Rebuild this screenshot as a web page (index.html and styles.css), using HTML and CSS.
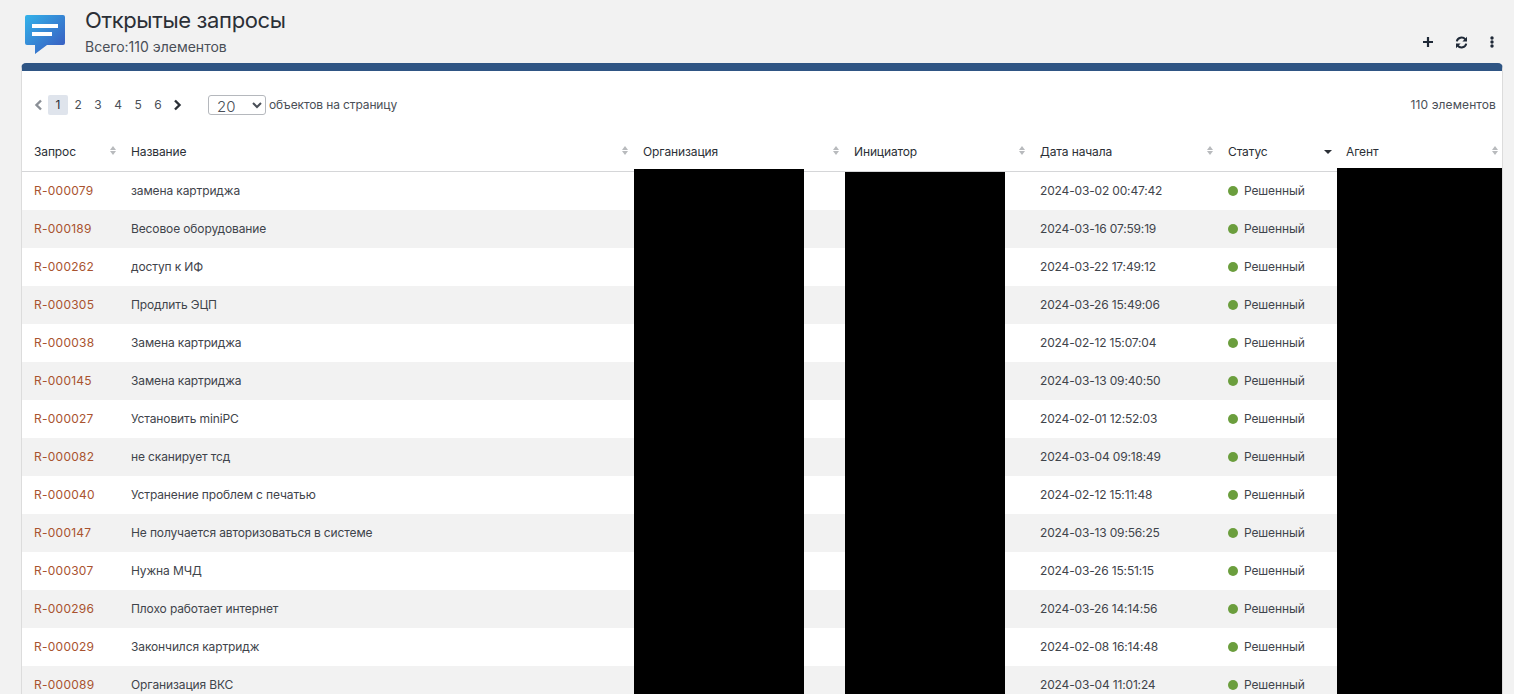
FILE: index.html
```html
<!DOCTYPE html>
<html lang="ru">
<head>
<meta charset="utf-8">
<title>Открытые запросы</title>
<link rel="stylesheet" href="styles.css">
</head>
<body>
<header class="page-head">
  <svg class="logo" width="40" height="40" viewBox="0 0 40 40">
    <defs><linearGradient id="lg" x1="0" y1="0" x2="1" y2="1"><stop offset="0" stop-color="#33b3ea"/><stop offset="1" stop-color="#3a55bd"/></linearGradient></defs>
    <path d="M2 0H38a2 2 0 0 1 2 2V28a2 2 0 0 1-2 2H22L10 39V30H2a2 2 0 0 1-2-2V2A2 2 0 0 1 2 0Z" fill="url(#lg)"/>
    <rect x="7" y="9" width="26" height="4" fill="#fff"/>
    <rect x="7" y="17" width="20" height="4" fill="#fff"/>
  </svg>
  <div class="titles">
    <h1>Открытые запросы</h1>
    <div class="subtitle">Всего:110 элементов</div>
  </div>
  <div class="actions">
    <svg width="12" height="12" viewBox="0 0 12 12"><path d="M6 1V11M1 6H11" stroke="#1f2937" stroke-width="2.2"/></svg>
    <svg width="13" height="13" viewBox="0 0 13 13" fill="none"><path d="M1.800 5.400A4.800 4.800 0 0 1 10.300 3.400" stroke="#1f2937" stroke-width="2"/><path d="M12 .8V5.400H7.400Z" fill="#1f2937"/><path d="M11.200 7.600A4.800 4.800 0 0 1 2.700 9.600" stroke="#1f2937" stroke-width="2"/><path d="M1 12.200V7.600H5.600Z" fill="#1f2937"/></svg>
    <svg class="more" width="4" height="12" viewBox="0 0 4 12"><circle cx="2" cy="2" r="1.700" fill="#1f2937"/><circle cx="2" cy="6" r="1.700" fill="#1f2937"/><circle cx="2" cy="10" r="1.700" fill="#1f2937"/></svg>
  </div>
</header>

<main class="card">
  <div class="toolbar">
    <nav class="pager">
      <svg class="chev" width="9" height="12" viewBox="0 0 9 12"><path d="M7 1.500 2.500 6 7 10.500" fill="none" stroke="#8a8f96" stroke-width="2.400"/></svg>
      <span class="page current">1</span><span class="page">2</span><span class="page">3</span><span class="page">4</span><span class="page">5</span><span class="page">6</span>
      <svg class="chev next" width="9" height="12" viewBox="0 0 9 12"><path d="M2 1.500 6.500 6 2 10.500" fill="none" stroke="#2a2f36" stroke-width="2.400"/></svg>
    </nav>
    <select class="size"><option>20</option></select>
    <span class="size-label">объектов на страницу</span>
    <span class="total">110 элементов</span>
  </div>
  <table class="grid">
    <colgroup><col class="c1"><col class="c2"><col class="c3"><col class="c4"><col class="c5"><col class="c6"><col class="c7"></colgroup>
    <thead>
      <tr>
        <th>Запрос<i class="sort"></i></th><th>Название<i class="sort"></i></th><th>Организация<i class="sort"></i></th><th>Инициатор<i class="sort"></i></th><th>Дата начала<i class="sort"></i></th><th>Статус<i class="sort-desc"></i></th><th>Агент<i class="sort"></i></th>
      </tr>
    </thead>
    <tbody>
      <tr><td><a>R-000079</a></td><td>замена картриджа</td><td></td><td></td><td class="date">2024-03-02 00:47:42</td><td><b class="dot"></b>Решенный</td><td></td></tr>
      <tr><td><a>R-000189</a></td><td>Весовое оборудование</td><td></td><td></td><td class="date">2024-03-16 07:59:19</td><td><b class="dot"></b>Решенный</td><td></td></tr>
      <tr><td><a>R-000262</a></td><td>доступ к ИФ</td><td></td><td></td><td class="date">2024-03-22 17:49:12</td><td><b class="dot"></b>Решенный</td><td></td></tr>
      <tr><td><a>R-000305</a></td><td>Продлить ЭЦП</td><td></td><td></td><td class="date">2024-03-26 15:49:06</td><td><b class="dot"></b>Решенный</td><td></td></tr>
      <tr><td><a>R-000038</a></td><td>Замена картриджа</td><td></td><td></td><td class="date">2024-02-12 15:07:04</td><td><b class="dot"></b>Решенный</td><td></td></tr>
      <tr><td><a>R-000145</a></td><td>Замена картриджа</td><td></td><td></td><td class="date">2024-03-13 09:40:50</td><td><b class="dot"></b>Решенный</td><td></td></tr>
      <tr><td><a>R-000027</a></td><td>Установить miniPC</td><td></td><td></td><td class="date">2024-02-01 12:52:03</td><td><b class="dot"></b>Решенный</td><td></td></tr>
      <tr><td><a>R-000082</a></td><td>не сканирует тсд</td><td></td><td></td><td class="date">2024-03-04 09:18:49</td><td><b class="dot"></b>Решенный</td><td></td></tr>
      <tr><td><a>R-000040</a></td><td>Устранение проблем с печатью</td><td></td><td></td><td class="date">2024-02-12 15:11:48</td><td><b class="dot"></b>Решенный</td><td></td></tr>
      <tr><td><a>R-000147</a></td><td>Не получается авторизоваться в системе</td><td></td><td></td><td class="date">2024-03-13 09:56:25</td><td><b class="dot"></b>Решенный</td><td></td></tr>
      <tr><td><a>R-000307</a></td><td>Нужна МЧД</td><td></td><td></td><td class="date">2024-03-26 15:51:15</td><td><b class="dot"></b>Решенный</td><td></td></tr>
      <tr><td><a>R-000296</a></td><td>Плохо работает интернет</td><td></td><td></td><td class="date">2024-03-26 14:14:56</td><td><b class="dot"></b>Решенный</td><td></td></tr>
      <tr><td><a>R-000029</a></td><td>Закончился картридж</td><td></td><td></td><td class="date">2024-02-08 16:14:48</td><td><b class="dot"></b>Решенный</td><td></td></tr>
      <tr><td><a>R-000089</a></td><td>Организация ВКС</td><td></td><td></td><td class="date">2024-03-04 11:01:24</td><td><b class="dot"></b>Решенный</td><td></td></tr>
    </tbody>
  </table>
  <div class="redact r-org"></div>
  <div class="redact r-init"></div>
  <div class="redact r-agent"></div>
</main>
</body>
</html>
```
FILE: styles.css
```css
html, body { margin: 0; height: 694px; overflow: hidden; }
body {
  background: #f2f2f2;
  color: #2b2f36;
  font-family: "Inter", "Open Sans", "Liberation Sans", sans-serif;
  font-size: 12px;
  letter-spacing: -0.12px;
}
.page-head {
  display: flex;
  height: 63px;
  padding: 0 20px 0 25px;
  box-sizing: border-box;
}
.logo { margin-top: 15px; }
.titles { margin-left: 20px; padding-top: 6px; }
h1 { margin: 0; font-size: 22px; font-weight: 400; line-height: 28px; letter-spacing: -0.36px; color: #2b2f36; }
.subtitle { margin-top: 4px; font-size: 14px; line-height: 18px; letter-spacing: 0; color: #4a4f57; }
.actions {
  margin-left: auto;
  display: flex;
  align-items: center;
  gap: 21px;
  height: 14px;
  margin-top: 35px;
}
.more { margin-left: 1px; }
.card {
  position: relative;
  margin: 0 11px 0 21px;
  height: 640px;
  background: #fff;
  border-top: 8px solid #2f5584;
  border-left: 1px solid #dcdcdc;
  border-right: 1px solid #dcdcdc;
  border-radius: 5px 5px 0 0;
}
.toolbar {
  display: flex;
  align-items: center;
  height: 66px;
  padding: 1px 6px 0 11px;
  box-sizing: border-box;
  color: #4a4f57;
}
.pager { display: flex; align-items: center; width: 175px; padding-left: 1px; box-sizing: border-box; }
.chev { margin: 0 5px 0 0; }
.chev.next { margin: 0 0 0 5px; }
.page { width: 20px; height: 20px; line-height: 20px; text-align: center; border-radius: 2px; }
.page.current { background: #dfe4ec; color: #2b2f36; }
.size {
  width: 58px;
  height: 20px;
  padding: 0 0 0 4px;
  font: 300 15px "Inter", sans-serif;
  color: #4a4f57;
  background: #fff;
  border: 1px solid #b5b8bd;
  border-radius: 3px;
}
.size-label { margin-left: 3px; }
.total { margin-left: auto; letter-spacing: 0.1px; }
.grid { width: 1480px; table-layout: fixed; border-collapse: collapse; }
.c1 { width: 97px; } .c2 { width: 512px; } .c3 { width: 211px; } .c4 { width: 186px; }
.c5 { width: 188px; } .c6 { width: 118px; } .c7 { width: 168px; }
th {
  position: relative;
  height: 28px;
  padding: 0 12px 6px;
  text-align: left;
  font-weight: 400;
  color: #2b2f36;
  border-bottom: 1px solid #d5d6d8;
}
td { height: 36px; padding: 0 12px 2px; color: #3f444b; }
tbody tr:nth-child(even) { background: #f2f2f2; }
td a { color: #a9532f; letter-spacing: 0.25px; }
td.date { letter-spacing: -0.16px; }
.sort, .sort-desc { position: absolute; top: 9px; width: 7px; height: 9px; }
th .sort { right: 2px; }
th .sort-desc { right: 3px; }
th:last-child .sort { right: 3px; }
.sort::before, .sort::after {
  content: "";
  position: absolute;
  left: 0;
  border-left: 3.5px solid transparent;
  border-right: 3.5px solid transparent;
}
.sort::before { top: 0; border-bottom: 4px solid #b8babd; }
.sort::after { bottom: 0; border-top: 4px solid #b8babd; }
.sort-desc::after {
  content: "";
  position: absolute;
  top: 4px;
  left: 0;
  border-left: 4px solid transparent;
  border-right: 4px solid transparent;
  border-top: 4px solid #2b2f36;
}
.dot {
  display: inline-block;
  width: 10px;
  height: 10px;
  margin-right: 6px;
  border-radius: 50%;
  background: #6b9e3d;
  vertical-align: -1px;
}
.redact { position: absolute; bottom: 0; background: #000; }
.r-org { left: 612px; width: 170px; top: 98px; }
.r-init { left: 823px; width: 160px; top: 101px; }
.r-agent { left: 1315px; width: 165px; top: 97px; }
```
